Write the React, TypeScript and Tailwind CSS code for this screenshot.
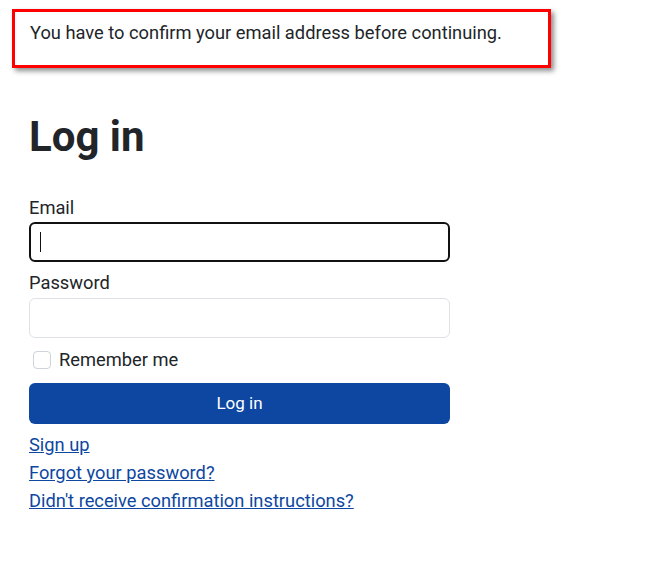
export default function App() {
  return (
    <div className="min-h-screen bg-white text-[#212529] font-['Roboto',sans-serif]">
      <div className="pt-[9px] pl-[12px]">
        <div className="w-[539px] h-[59px] border-[3px] border-[#ff0000] pl-[15px] pt-[7px] shadow-[3px_3px_5px_rgba(0,0,0,0.45)]">
          <p className="text-[18.3px] leading-[27px]">You have to confirm your email address before continuing.</p>
        </div>
      </div>

      <div className="pl-[29px] w-[450px] box-content">
        <h1 className="mt-[42px] text-[42px] leading-[53px] font-bold">Log in</h1>

        <form className="mt-[28px]" onSubmit={(e) => e.preventDefault()}>
          <label className="block pt-[6px] text-[18.3px] leading-[21px]">Email</label>
          <div className="mt-[4px] h-[40px] w-[421px] rounded-[6px] border-2 border-[#111] flex items-center pl-[9px]">
            <span className="block w-px h-[20px] bg-[#111]" />
          </div>

          <label className="block mt-[5px] pt-[5px] text-[18.3px] leading-[22px]">Password</label>
          <input
            type="password"
            className="block mt-[4px] h-[40px] w-[421px] rounded-[6px] border border-[#dee2e6] outline-none"
          />

          <label className="mt-[8px] flex items-center h-[27px] text-[18.3px]">
            <span className="ml-[4px] w-[18px] h-[18px] rounded-[4px] border border-[#ced4da] bg-white" />
            <span className="ml-[8px]">Remember me</span>
          </label>

          <button
            type="submit"
            className="mt-[10px] h-[41px] w-[421px] rounded-[6px] bg-[#0d47a1] text-white text-[17px]"
          >
            Log in
          </button>
        </form>

        <div className="mt-[7px] flex flex-col text-[18.3px] leading-[28px] text-[#0d47a1]">
          <a href="#" className="underline self-start">Sign up</a>
          <a href="#" className="underline self-start">Forgot your password?</a>
          <a href="#" className="underline self-start">Didn't receive confirmation instructions?</a>
        </div>
      </div>
    </div>
  );
}
